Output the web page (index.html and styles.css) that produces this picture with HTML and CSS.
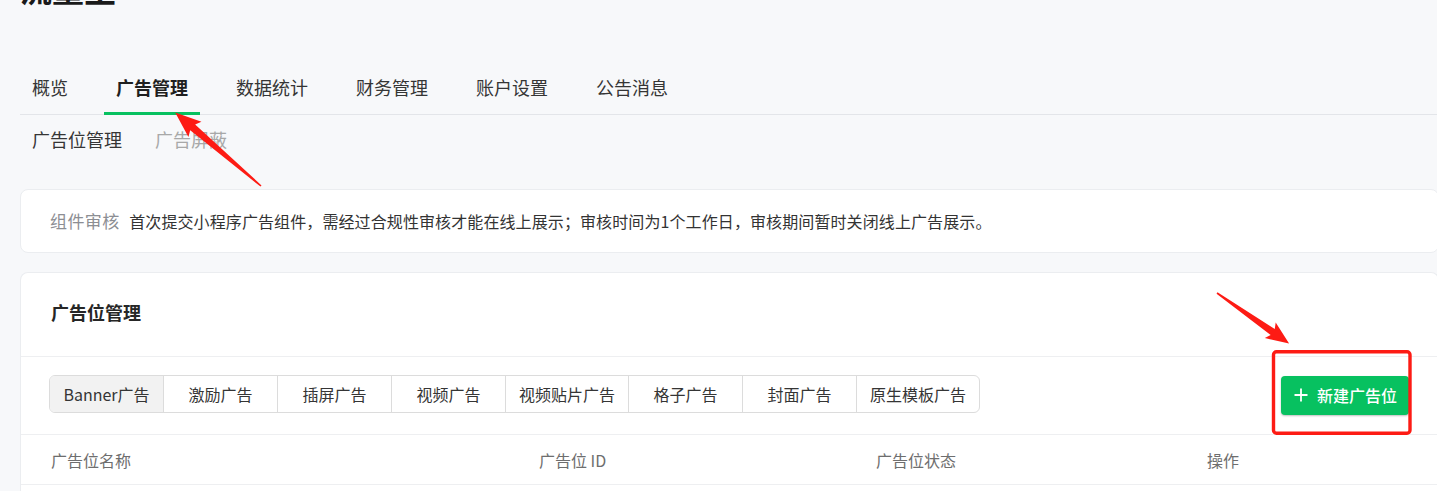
FILE: index.html
```html
<!DOCTYPE html>
<html lang="zh-CN">
<head>
<meta charset="utf-8">
<title>流量主 - 广告管理</title>
<link rel="stylesheet" href="styles.css">
</head>
<body>
<div class="page">
  <h1 class="title">流量主</h1>
  <nav class="nav">
    <a class="nav-item">概览</a>
    <a class="nav-item active">广告管理</a>
    <a class="nav-item">数据统计</a>
    <a class="nav-item">财务管理</a>
    <a class="nav-item">账户设置</a>
    <a class="nav-item">公告消息</a>
  </nav>
  <div class="subnav">
    <a class="sub-item active">广告位管理</a>
    <a class="sub-item">广告屏蔽</a>
  </div>
  <div class="card notice">
    <span class="notice-label">组件审核</span>
    <span class="notice-text">首次提交小程序广告组件，需经过合规性审核才能在线上展示；审核时间为1个工作日，审核期间暂时关闭线上广告展示。</span>
  </div>
  <div class="card main">
    <div class="card-head">广告位管理</div>
    <div class="toolbar">
      <div class="seg">
        <span class="seg-item active">Banner广告</span>
        <span class="seg-item">激励广告</span>
        <span class="seg-item">插屏广告</span>
        <span class="seg-item">视频广告</span>
        <span class="seg-item">视频贴片广告</span>
        <span class="seg-item">格子广告</span>
        <span class="seg-item">封面广告</span>
        <span class="seg-item">原生模板广告</span>
      </div>
      <button class="btn-primary"><svg class="plus" viewBox="0 0 14 14" width="14" height="14"><path d="M7 0.5V13.5M0.5 7H13.5" stroke="#fff" stroke-width="1.8" fill="none"/></svg><span>新建广告位</span></button>
    </div>
    <div class="thead">
      <span class="th">广告位名称</span>
      <span class="th">广告位 ID</span>
      <span class="th">广告位状态</span>
      <span class="th">操作</span>
    </div>
    <div class="tbody"></div>
  </div>
</div>
<svg class="marks" width="1437" height="491" viewBox="0 0 1437 491">
  <polygon fill="#fd1b14" transform="translate(261,186) rotate(220.6)" points="0,-0.8 90,-3.8 87,-10 113,0 87,10 90,3.8 0,0.8"/>
  <polygon fill="#fd1b14" transform="translate(1217,293) rotate(35)" points="0,-0.8 68,-3.6 65,-9.5 88,0 65,9.5 68,3.6 0,0.8"/>
  <rect x="1273.5" y="351.8" width="136.5" height="81.5" rx="3" ry="3" fill="none" stroke="#fd1b14" stroke-width="3.4"/>
</svg>
</body>
</html>
```

FILE: styles.css
```css
html, body {
  margin: 0;
  padding: 0;
  overflow: hidden;
  background: #f7f8fa;
}
body {
  font-family: "Noto Sans CJK SC", "Noto Sans", sans-serif;
  color: #333;
  position: relative;
  width: 1437px;
  height: 491px;
}
.page {
  padding-left: 20px;
  width: 1419px;
}
.title {
  margin: -28px 0 0 0;
  height: 33px;
  line-height: 33px;
  font-size: 32px;
  font-weight: 700;
  color: #1a1a1a;
}
.nav {
  margin-top: 56px;
  display: flex;
  gap: 24px;
  border-bottom: 1px solid #e3e5e9;
}
.nav-item {
  padding: 3px 12px 2px;
  line-height: 46px;
  font-size: 18px;
  color: #353535;
  border-bottom: 3px solid transparent;
  margin-bottom: -1px;
}
.nav-item.active {
  font-weight: 700;
  color: #1f1f1f;
  border-bottom-color: #07c160;
}
.subnav {
  display: flex;
  gap: 33px;
  padding: 0 0 4px 12px;
  line-height: 49px;
  font-size: 18px;
}
.sub-item {
  color: #353535;
}
.sub-item:not(.active) {
  color: #a8a8a8;
}
.card {
  background: #fff;
  border: 1px solid #ebedf0;
  border-radius: 8px;
}
.notice {
  margin-top: 21px;
  height: 62px;
  line-height: 62px;
  padding-left: 29px;
  font-size: 16px;
  white-space: nowrap;
}
.notice-label {
  color: #8c8e93;
  margin-right: 6px;
  font-size: 17px;
  letter-spacing: 0.4px;
}
.notice-text {
  color: #333;
  letter-spacing: 0.1px;
}
.main {
  margin-top: 19px;
  border-radius: 8px 8px 0 0;
  border-bottom: none;
}
.card-head {
  height: 83px;
  line-height: 79px;
  padding-left: 30px;
  font-size: 18px;
  font-weight: 700;
  color: #262626;
  border-bottom: 1px solid #eeeff1;
}
.toolbar {
  height: 77px;
  padding: 0 29px 0 28px;
  display: flex;
  align-items: center;
  justify-content: space-between;
  border-bottom: 1px solid #eeeff1;
}
.seg {
  display: flex;
  border: 1px solid #dcdcdc;
  border-radius: 6px;
  overflow: hidden;
  margin-top: -3px;
}
.seg-item {
  box-sizing: border-box;
  min-width: 114px;
  padding: 0 13px;
  line-height: 36px;
  text-align: center;
  font-size: 16px;
  color: #353535;
  border-left: 1px solid #dcdcdc;
  white-space: nowrap;
}
.seg-item:first-child {
  border-left: none;
  min-width: 113px;
}
.seg-item.active {
  background: #f2f2f2;
}
.btn-primary {
  display: flex;
  align-items: center;
  gap: 9px;
  height: 39px;
  width: 128px;
  padding: 0 0 0 13px;
  margin-top: -1px;
  border: none;
  border-radius: 4px;
  background: #07c160;
  box-shadow: 0 1px 2px rgba(0, 0, 0, 0.25);
  color: #fff;
  font-family: inherit;
  font-size: 16px;
  font-weight: 500;
}
.plus {
  display: block;
}
.thead {
  display: grid;
  grid-template-columns: 488px 337px 331px 1fr;
  height: 49px;
  line-height: 51px;
  padding-left: 30px;
  border-bottom: 1px solid #eeeff1;
  font-size: 16px;
  color: #6e6e6e;
}
.tbody {
  height: 20px;
}
.marks {
  position: absolute;
  left: 0;
  top: 0;
  pointer-events: none;
}
```
